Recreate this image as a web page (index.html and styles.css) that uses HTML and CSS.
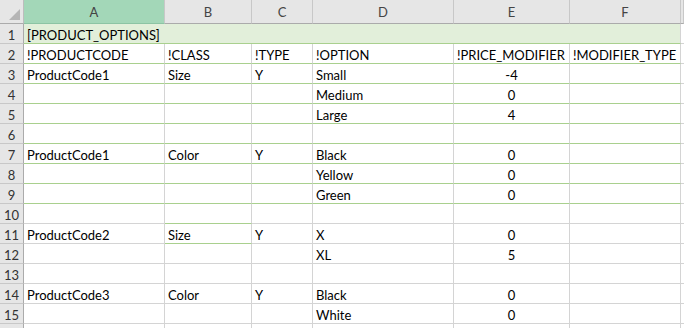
FILE: index.html
```html
<!DOCTYPE html>
<html lang="en">
  <head>
    <meta charset="UTF-8" />
    <meta name="viewport" content="width=device-width, initial-scale=1.0" />
    <title>Product options</title>
    <link rel="stylesheet" href="styles.css">
  </head>

  <body>
    <div class="sheet">
      <div class="row head">
        <div class="corner"><span class="tri"></span></div>
        <div class="col sel">A</div>
        <div class="col">B</div>
        <div class="col">C</div>
        <div class="col">D</div>
        <div class="col">E</div>
        <div class="col">F</div>
        <div class="col"></div>
      </div>

      <div class="row">
        <div class="rh">1</div>
        <div class="c title g">[PRODUCT_OPTIONS]</div>
        <div class="c"></div>
      </div>

      <div class="row">
        <div class="rh">2</div>
        <div class="c g">!PRODUCTCODE</div>
        <div class="c g">!CLASS</div>
        <div class="c g">!TYPE</div>
        <div class="c g">!OPTION</div>
        <div class="c g">!PRICE_MODIFIER</div>
        <div class="c g">!MODIFIER_TYPE</div>
        <div class="c"></div>
      </div>

      <div class="row">
        <div class="rh">3</div>
        <div class="c g">ProductCode1</div>
        <div class="c g">Size</div>
        <div class="c g">Y</div>
        <div class="c g">Small</div>
        <div class="c g num">-4</div>
        <div class="c g"></div>
        <div class="c"></div>
      </div>

      <div class="row">
        <div class="rh">4</div>
        <div class="c g"></div>
        <div class="c g"></div>
        <div class="c g"></div>
        <div class="c g">Medium</div>
        <div class="c g num">0</div>
        <div class="c g"></div>
        <div class="c"></div>
      </div>

      <div class="row">
        <div class="rh">5</div>
        <div class="c g"></div>
        <div class="c g"></div>
        <div class="c g"></div>
        <div class="c g">Large</div>
        <div class="c g num">4</div>
        <div class="c g"></div>
        <div class="c"></div>
      </div>

      <div class="row">
        <div class="rh">6</div>
        <div class="c g"></div>
        <div class="c g"></div>
        <div class="c g"></div>
        <div class="c g"></div>
        <div class="c g"></div>
        <div class="c g"></div>
        <div class="c"></div>
      </div>

      <div class="row">
        <div class="rh">7</div>
        <div class="c g">ProductCode1</div>
        <div class="c g">Color</div>
        <div class="c g">Y</div>
        <div class="c g">Black</div>
        <div class="c g num">0</div>
        <div class="c g"></div>
        <div class="c"></div>
      </div>

      <div class="row">
        <div class="rh">8</div>
        <div class="c g"></div>
        <div class="c g"></div>
        <div class="c g"></div>
        <div class="c g">Yellow</div>
        <div class="c g num">0</div>
        <div class="c g"></div>
        <div class="c"></div>
      </div>

      <div class="row">
        <div class="rh">9</div>
        <div class="c g"></div>
        <div class="c g"></div>
        <div class="c g"></div>
        <div class="c g">Green</div>
        <div class="c g num">0</div>
        <div class="c g"></div>
        <div class="c"></div>
      </div>

      <div class="row">
        <div class="rh">10</div>
        <div class="c"></div>
        <div class="c g"></div>
        <div class="c"></div>
        <div class="c"></div>
        <div class="c"></div>
        <div class="c"></div>
        <div class="c"></div>
      </div>

      <div class="row">
        <div class="rh">11</div>
        <div class="c">ProductCode2</div>
        <div class="c g">Size</div>
        <div class="c">Y</div>
        <div class="c">X</div>
        <div class="c num">0</div>
        <div class="c"></div>
        <div class="c"></div>
      </div>

      <div class="row">
        <div class="rh">12</div>
        <div class="c"></div>
        <div class="c"></div>
        <div class="c"></div>
        <div class="c">XL</div>
        <div class="c num">5</div>
        <div class="c"></div>
        <div class="c"></div>
      </div>

      <div class="row">
        <div class="rh">13</div>
        <div class="c"></div>
        <div class="c"></div>
        <div class="c"></div>
        <div class="c"></div>
        <div class="c"></div>
        <div class="c"></div>
        <div class="c"></div>
      </div>

      <div class="row">
        <div class="rh">14</div>
        <div class="c">ProductCode3</div>
        <div class="c">Color</div>
        <div class="c">Y</div>
        <div class="c">Black</div>
        <div class="c num">0</div>
        <div class="c"></div>
        <div class="c"></div>
      </div>

      <div class="row">
        <div class="rh">15</div>
        <div class="c"></div>
        <div class="c"></div>
        <div class="c"></div>
        <div class="c">White</div>
        <div class="c num">0</div>
        <div class="c"></div>
        <div class="c"></div>
      </div>

      <!-- next row, only its top edge shows -->
      <div class="row">
        <div class="rh"></div>
        <div class="c"></div>
        <div class="c"></div>
        <div class="c"></div>
        <div class="c"></div>
        <div class="c"></div>
        <div class="c"></div>
        <div class="c"></div>
      </div>
    </div>
  </body>
</html>
```

FILE: styles.css
```css
body {
  margin: 0;
  background-color: #ffffff;
  font-family: Lato, "Liberation Sans", Arial, sans-serif;
  font-size: 13px;
  color: #000000;
  overflow: hidden;
}

.sheet {
  display: flex;
  flex-direction: column;
  width: 684px;
}

.row {
  display: grid;
  /* row header, A..F, then a sliver of G */
  grid-template-columns: 24px 141px 87px 61px 141px 116px 111px 1fr;
  height: 20px;
}

.row > div {
  box-sizing: border-box;
  white-space: nowrap;
}

/* column headers */
.head {
  height: 24px;
}

.corner {
  display: flex;
  justify-content: flex-end;
  align-items: flex-end;
  padding: 0 3px 3px 0;
  background-color: #e6e6e6;
  border-right: 1px solid #bdbdbd;
  border-bottom: 1px solid #ababab;
}

.tri {
  width: 11px;
  height: 11px;
  background-color: #b5b5b5;
  clip-path: polygon(100% 0, 100% 100%, 0 100%);
}

.col {
  display: flex;
  justify-content: center;
  align-items: center;
  padding-top: 1px;
  background-color: #e6e6e6;
  color: #444444;
  border-right: 1px solid #c8c8c8;
  border-bottom: 1px solid #ababab;
}

.col.sel {
  background-color: #a3d7b8;
  border-bottom-color: #8cc4a4;
}

/* row headers */
.rh {
  text-align: center;
  line-height: 16px;
  padding-top: 3px;
  background-color: #e6e6e6;
  color: #333333;
  border-right: 1px solid #ababab;
  border-bottom: 1px solid #c8c8c8;
}

/* cells */
.c {
  padding: 3px 0 0 3px;
  line-height: 16px;
  border-right: 1px solid #d4d4d4;
  border-bottom: 1px solid #d4d4d4;
}

.c.g {
  border-bottom-color: #a9d08e;
}

.c.num {
  padding-left: 0;
  text-align: center;
}

.c.title {
  grid-column: span 6;
  background-color: #e2efda;
}
```
